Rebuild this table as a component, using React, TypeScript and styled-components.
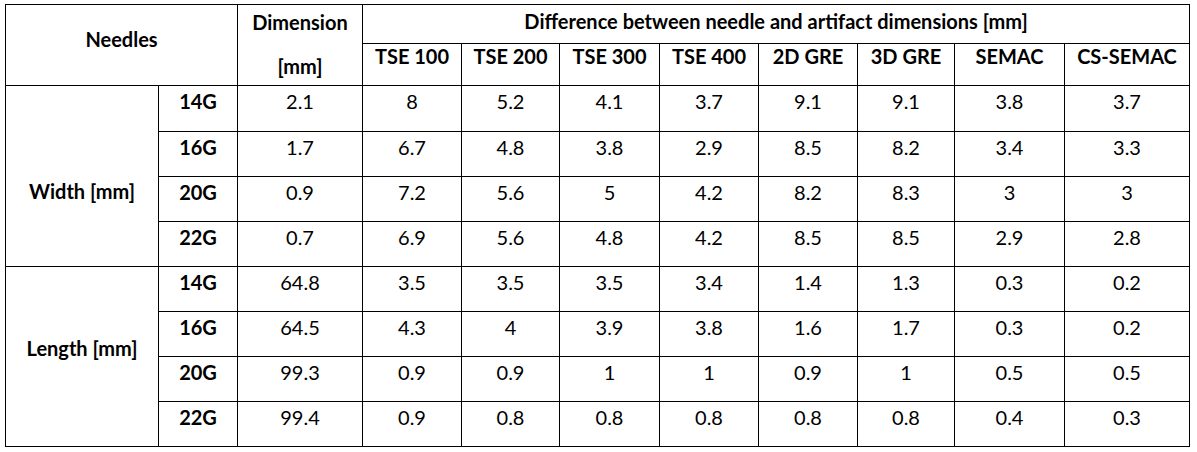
import React from 'react'
import styled, { createGlobalStyle } from 'styled-components'

const GlobalStyle = createGlobalStyle`
  body {
    margin: 0;
    background: #fff;
    font-family: Lato, "Open Sans", sans-serif;
    color: #000;
  }
`

const Page = styled.div`
  padding: 4px 0 0 5px;
`

const Table = styled.div`
  display: grid;
  grid-template-columns: 152px 78px 124px 98px 97px 99px 98px 98px 96px 109px 124px;
  grid-template-rows: 38px 41px 45px repeat(7, 44px);
  gap: 1px;
  width: max-content;
  border: 1px solid #000;
  background: #000;
`

const Cell = styled.div<{ $bold?: boolean; $top?: number; $col?: string; $row?: string }>`
  background: #fff;
  display: flex;
  flex-direction: column;
  align-items: center;
  justify-content: flex-start;
  padding-top: ${p => p.$top ?? 4}px;
  font-size: 20px;
  line-height: 22px;
  font-weight: ${p => (p.$bold ? 700 : 400)};
  white-space: nowrap;
  ${p => (p.$col ? `grid-column: ${p.$col};` : '')}
  ${p => (p.$row ? `grid-row: ${p.$row};` : '')}
`

const Line = styled.span<{ $gap?: number }>`
  display: block;
  margin-top: ${p => p.$gap ?? 0}px;
`

const methods = ['TSE 100', 'TSE 200', 'TSE 300', 'TSE 400', '2D GRE', '3D GRE', 'SEMAC', 'CS-SEMAC']

const groups = [
  {
    label: 'Width [mm]',
    top: 94,
    rows: [
      ['14G', '2.1', '8', '5.2', '4.1', '3.7', '9.1', '9.1', '3.8', '3.7'],
      ['16G', '1.7', '6.7', '4.8', '3.8', '2.9', '8.5', '8.2', '3.4', '3.3'],
      ['20G', '0.9', '7.2', '5.6', '5', '4.2', '8.2', '8.3', '3', '3'],
      ['22G', '0.7', '6.9', '5.6', '4.8', '4.2', '8.5', '8.5', '2.9', '2.8'],
    ],
  },
  {
    label: 'Length [mm]',
    top: 70,
    rows: [
      ['14G', '64.8', '3.5', '3.5', '3.5', '3.4', '1.4', '1.3', '0.3', '0.2'],
      ['16G', '64.5', '4.3', '4', '3.9', '3.8', '1.6', '1.7', '0.3', '0.2'],
      ['20G', '99.3', '0.9', '0.9', '1', '1', '0.9', '1', '0.5', '0.5'],
      ['22G', '99.4', '0.9', '0.8', '0.8', '0.8', '0.8', '0.8', '0.4', '0.3'],
    ],
  },
]

export default function App() {
  return (
    <Page>
      <GlobalStyle />
      <Table>
        <Cell $bold $top={23} $col="1 / 3" $row="1 / 3">Needles</Cell>
        <Cell $bold $top={6} $col="3" $row="1 / 3">
          <Line>Dimension</Line>
          <Line $gap={22}>[mm]</Line>
        </Cell>
        <Cell $bold $top={5} $col="4 / 12" $row="1">
          Difference between needle and artifact dimensions [mm]
        </Cell>
        {methods.map(m => (
          <Cell key={m} $bold $top={1}>{m}</Cell>
        ))}
        {groups.map((g, gi) => (
          <React.Fragment key={g.label}>
            <Cell $bold $top={g.top} $col="1" $row={`${3 + gi * 4} / span 4`}>{g.label}</Cell>
            {g.rows.map(r =>
              r.map((v, i) => (
                <Cell key={`${r[0]}-${i}`} $bold={i === 0}>{v}</Cell>
              ))
            )}
          </React.Fragment>
        ))}
      </Table>
    </Page>
  )
}
